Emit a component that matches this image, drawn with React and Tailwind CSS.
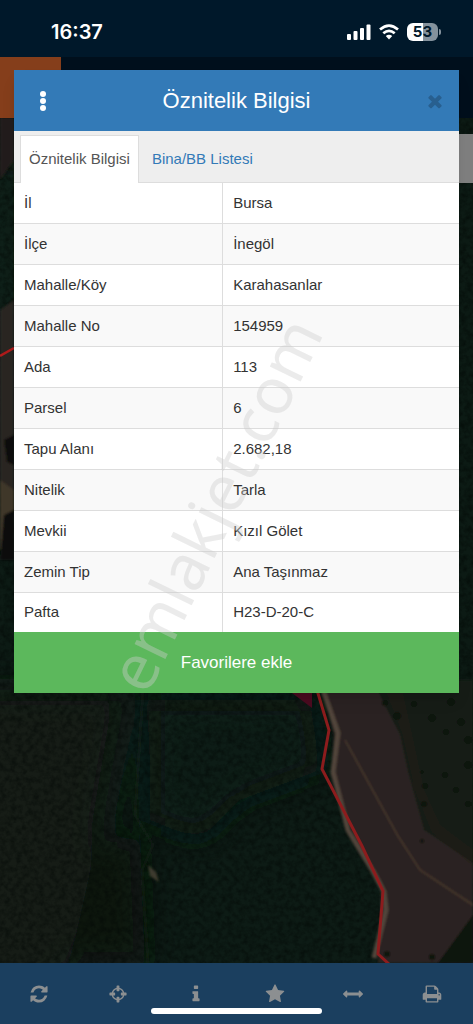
import React from "react";

const rows = [
  ["İl", "Bursa"],
  ["İlçe", "İnegöl"],
  ["Mahalle/Köy", "Karahasanlar"],
  ["Mahalle No", "154959"],
  ["Ada", "113"],
  ["Parsel", "6"],
  ["Tapu Alanı", "2.682,18"],
  ["Nitelik", "Tarla"],
  ["Mevkii", "Kızıl Gölet"],
  ["Zemin Tip", "Ana Taşınmaz"],
  ["Pafta", "H23-D-20-C"],
];

const tools = [
  {
    label: "Yenile",
    d: "M1639 1056q0 5-1 7-64 268-268 434.5t-478 166.5q-146 0-282.5-55t-243.5-157l-129 129q-19 19-45 19t-45-19-19-45v-448q0-26 19-45t45-19h448q26 0 45 19t19 45-19 45l-137 137q71 66 161 102t187 36q134 0 250-65t186-179q11-17 53-117 8-23 30-23h192q13 0 22.5 9.5t9.5 22.5zm25-800v448q0 26-19 45t-45 19h-448q-26 0-45-19t-19-45 19-45l138-138q-148-137-349-137-134 0-250 65t-186 179q-11 17-53 117-8 23-30 23h-199q-13 0-22.5-9.5t-9.5-22.5v-7q65-268 270-434.5t480-166.5q146 0 284 55.5t245 156.5l130-129q19-19 45-19t45 19 19 45z",
  },
  {
    label: "Konum",
    d: "M1325 1024h-109q-26 0-45-19t-19-45v-128q0-26 19-45t45-19h109q-32-108-112.5-188.5t-188.5-112.5v109q0 26-19 45t-45 19h-128q-26 0-45-19t-19-45v-109q-108 32-188.5 112.5t-112.5 188.5h109q26 0 45 19t19 45v128q0 26-19 45t-45 19h-109q32 108 112.5 188.5t188.5 112.5v-109q0-26 19-45t45-19h128q26 0 45 19t19 45v109q108-32 188.5-112.5t112.5-188.5zm339-192v128q0 26-19 45t-45 19h-143q-37 161-154.5 278.5t-278.5 154.5v143q0 26-19 45t-45 19h-128q-26 0-45-19t-19-45v-143q-161-37-278.5-154.5t-154.5-278.5h-143q-26 0-45-19t-19-45v-128q0-26 19-45t45-19h143q37-161 154.5-278.5t278.5-154.5v-143q0-26 19-45t45-19h128q26 0 45 19t19 45v143q161 37 278.5 154.5t154.5 278.5h143q26 0 45 19t19 45z",
  },
  {
    label: "Bilgi",
    d: "M1216 1344v128q0 26-19 45t-45 19h-512q-26 0-45-19t-19-45v-128q0-26 19-45t45-19h64v-384h-64q-26 0-45-19t-19-45v-128q0-26 19-45t45-19h384q26 0 45 19t19 45v576h64q26 0 45 19t19 45zm-128-1152v192q0 26-19 45t-45 19h-256q-26 0-45-19t-19-45v-192q0-26 19-45t45-19h256q26 0 45 19t19 45z",
  },
  {
    label: "Favoriler",
    d: "M1728 647q0 22-26 48l-363 354 86 500q1 7 1 20 0 21-10.5 35.5t-30.5 14.5q-19 0-40-12l-449-236-449 236q-22 12-40 12-21 0-31.5-14.5t-10.5-35.5q0-6 2-20l86-500-364-354q-25-27-25-48 0-37 56-46l502-73 225-455q19-41 49-41t49 41l225 455 502 73q56 9 56 46z",
  },
  {
    label: "Ölçüm",
    d: "M1792 896q0 26-19 45l-256 256q-19 19-45 19t-45-19-19-45v-128h-1024v128q0 26-19 45t-45 19-45-19l-256-256q-19-19-19-45t19-45l256-256q19-19 45-19t45 19 19 45v128h1024v-128q0-26 19-45t45-19 45 19l256 256q19 19 19 45z",
  },
  {
    label: "Yazdır",
    d: "M448 1536h896v-256h-896v256zm0-640h896v-384h-160q-40 0-68-28t-28-68v-160h-640v640zm1152 64q0-26-19-45t-45-19-45 19-19 45 19 45 45 19 45-19 19-45zm128 0v416q0 13-9.5 22.5t-22.5 9.5h-224v160q0 40-28 68t-68 28h-960q-40 0-68-28t-28-68v-160h-224q-13 0-22.5-9.5t-9.5-22.5v-416q0-79 56.5-135.5t135.5-56.5h64v-544q0-40 28-68t68-28h672q40 0 88 20t76 48l152 152q28 28 48 76t20 88v256h64q79 0 135.5 56.5t56.5 135.5z",
  },
];

function StatusBar() {
  return (
    <div className="flex h-[57px] items-center justify-between bg-[#00182a] pt-1.5 pr-8 pl-[51px] text-white">
      <span className="font-['Inter',sans-serif] text-xl font-semibold">16:37</span>
      <div className="flex items-center gap-2">
        <svg className="h-4 w-6" viewBox="0 0 24 16" fill="currentColor" aria-hidden="true">
          <rect x="0" y="10" width="4" height="6" rx="1" />
          <rect x="6.500" y="7" width="4" height="9" rx="1" />
          <rect x="13" y="4" width="4" height="12" rx="1" />
          <rect x="19.500" y="0.500" width="4" height="15.500" rx="1" />
        </svg>
        <svg className="h-4 w-5" viewBox="0 0 20 16" fill="none" stroke="currentColor" strokeWidth="2.700" aria-hidden="true">
          <path d="M1 5.600 Q10 -2.400 19 5.600" />
          <path d="M4.300 9.300 Q10 4.300 15.700 9.300" />
          <path d="M6.800 12 Q10 9.500 13.200 12 L10 15.400Z" fill="currentColor" stroke="none" />
        </svg>
        <div className="flex items-center gap-px">
          <div className="flex h-[18px] w-[31px] items-center justify-center rounded-md bg-linear-to-r from-white from-52% to-[#84929d] to-52% font-['Inter',sans-serif] text-[15px] leading-none font-bold text-[#00182a]">
            53
          </div>
          <div className="h-1.5 w-0.5 rounded-r-full bg-[#84929d]" />
        </div>
      </div>
    </div>
  );
}

function SatelliteMap() {
  return (
    <svg
      className="absolute inset-0 h-full w-full"
      viewBox="0 118 473 845"
      preserveAspectRatio="xMidYMid slice"
      aria-hidden="true"
    >
      <defs>
        <filter id="trees" x="0" y="0" width="100%" height="100%" colorInterpolationFilters="sRGB">
          <feTurbulence type="fractalNoise" baseFrequency="0.18" numOctaves="3" seed="7" />
          <feColorMatrix values="0 0 0 0 0.010  0 0 0 0 0.030  0 0 0 0 0.020  2.200 0 0 0 -0.800" />
        </filter>
        <filter id="soft" x="-30%" y="-30%" width="160%" height="160%">
          <feGaussianBlur stdDeviation="16" />
        </filter>
        <filter id="edge">
          <feGaussianBlur stdDeviation="0.800" />
        </filter>
      </defs>
      <rect y="118" width="473" height="845" fill="#0d1b15" />
      <g filter="url(#soft)">
        <path d="M-40 690H125L100 840L60 1000H-40Z" fill="#141f17" />
        <path d="M150 700H310L320 770L240 800L200 840L150 820Z" fill="#0d1f18" />
        <path d="M95 850L140 830L145 963H70Z" fill="#08120f" />
        <path d="M-20 160H24V330H-20Z" fill="#0f2413" />
      </g>
      <rect y="118" width="473" height="845" filter="url(#trees)" opacity=".5" />
      <g filter="url(#edge)">
        <path d="M320 680H473V868V918L438 963H378L381 891L350 825L331 775L334 735Z" fill="#2c2421" />
        <path d="M372 680H473V863L424 830L408 772L400 735Z" fill="#171f19" />
        <path d="M382 680L403 735L415 790L432 832L473 866V850L440 825L424 790L412 735L402 690Z" fill="#232019" opacity=".7" />
        <path d="M345 740L398 836L420 870L473 905" fill="none" stroke="#47392f" strokeWidth="1.500" />
        <path d="M323 690L338 733L333 772L348 830L374 873L384 892L386 910L374 958" fill="none" stroke="#51443a" strokeWidth="5" />
        <path d="M438 963L473 915V963Z" fill="#0b120e" />
        <path d="M148 865L156 872L159 882L150 876Z" fill="#3c3b2d" />
        <path d="M143 690L135 815L153 845L142 870L148 963" fill="none" stroke="#232a22" strokeWidth="1.200" opacity=".6" />
        <path d="M0 118L14 118V160L0 180Z" fill="#231f1a" />
        <path d="M0 310L14 300V540L0 548Z" fill="#2c2521" />
        <path d="M0 480L14 490V535L0 550Z" fill="#40382c" />
        <path d="M4 440L14 435V465L7 462ZM4 515L14 510V560H0Z" fill="#0c100d" />
        <g fill="#0a120e">
          <circle cx="385" cy="703" r="3" />
          <circle cx="397" cy="716" r="4" />
          <circle cx="414" cy="704" r="3" />
          <circle cx="432" cy="718" r="4" />
          <circle cx="446" cy="732" r="3" />
          <circle cx="451" cy="702" r="4" />
          <circle cx="461" cy="722" r="4" />
          <circle cx="468" cy="740" r="4" />
          <circle cx="422" cy="772" r="2" />
          <circle cx="425" cy="786" r="3" />
          <circle cx="445" cy="775" r="3" />
          <circle cx="424" cy="804" r="3" />
          <circle cx="456" cy="790" r="3" />
          <circle cx="468" cy="765" r="4" />
          <circle cx="468" cy="804" r="3" />
          <circle cx="422" cy="841" r="2" />
          <circle cx="387" cy="954" r="3" />
          <circle cx="432" cy="957" r="3" />
        </g>
      </g>
      <path d="M288 690L312 708V690Z" fill="#4b0b20" />
      <path d="M317 690L329 730L322 769L362 846L383 891L378 954L390 965" fill="none" stroke="#8c1c1d" strokeWidth="3" />
      <path d="M0 356L14 348" stroke="#b01b1b" strokeWidth="2.500" />
    </svg>
  );
}

function AttributeDialog() {
  return (
    <section
      role="dialog"
      aria-labelledby="dialog-title"
      className="relative bg-white shadow-lg"
    >
      <header className="grid h-[61px] grid-cols-[58px_1fr_58px] items-center bg-[#337ab7] text-white">
        <button type="button" aria-label="Menü" className="flex h-full items-center justify-center">
          <svg className="h-5 w-1.5" viewBox="0 0 6 20" fill="currentColor" aria-hidden="true">
            <circle cx="3" cy="3" r="3" />
            <circle cx="3" cy="10" r="3" />
            <circle cx="3" cy="17" r="3" />
          </svg>
        </button>
        <h1 id="dialog-title" className="text-center text-[22px]">
          Öznitelik Bilgisi
        </h1>
        <button type="button" aria-label="Kapat" className="flex h-full items-center justify-center pl-2.5 text-[#285f8f]">
          <svg className="h-5 w-5" viewBox="0 0 1792 1792" fill="currentColor" aria-hidden="true">
            <path d="M1490 1322q0 40-28 68l-136 136q-28 28-68 28t-68-28l-294-294-294 294q-28 28-68 28t-68-28l-136-136q-28-28-28-68t28-68l294-294-294-294q-28-28-28-68t28-68l136-136q28-28 68-28t68 28l294 294 294-294q28-28 68-28t68 28l136 136q28 28 28 68t-28 68l-294 294 294 294q28 28 28 68z" />
          </svg>
        </button>
      </header>

      <div role="tablist" className="flex h-[52px] items-end border-b border-[#dddddd] bg-[#eeeeee] pl-1.5 text-[15px]">
        <button
          type="button"
          role="tab"
          aria-selected="true"
          className="-mb-px h-12 border border-b-0 border-[#dddddd] bg-white px-2 text-[#555555]"
        >
          Öznitelik Bilgisi
        </button>
        <button type="button" role="tab" aria-selected="false" className="h-[46px] px-[13px] text-[#337ab7]">
          Bina/BB Listesi
        </button>
      </div>

      <table className="w-full table-fixed border-separate border-spacing-0 text-[15px] text-[#333333]">
        <colgroup>
          <col className="w-[47%]" />
          <col />
        </colgroup>
        <tbody>
          {rows.map(([name, value]) => (
            <tr key={name} className="group h-[41px] even:bg-[#f9f9f9] last:h-[39px]">
              <th
                scope="row"
                className="border-r border-b border-[#dddddd] px-2.5 text-left font-normal group-last:border-b-0"
              >
                {name}
              </th>
              <td className="border-b border-[#dddddd] px-2.5 group-last:border-b-0">{value}</td>
            </tr>
          ))}
        </tbody>
      </table>

      <button type="button" className="block h-[61px] w-full bg-[#5cb85c] text-[17px] text-white">
        Favorilere ekle
      </button>

      <div className="pointer-events-none absolute inset-x-0 top-[132px] bottom-0 flex items-center justify-center pt-28 pr-11">
        <span className="-rotate-[64deg] font-['Noto_Sans',sans-serif] text-[64px] leading-none whitespace-nowrap text-[#cccccc]/40">
          emlakjet.com
        </span>
      </div>
    </section>
  );
}

export default function App() {
  return (
    <div className="relative flex min-h-screen flex-col bg-[#00101e] font-['Liberation_Sans',Arial,sans-serif]">
      <StatusBar />
      <div className="flex h-[61px] bg-[#000f1c]">
        <div className="w-[61px] bg-[#853e1b]" />
      </div>
      <main className="relative flex-1 overflow-hidden">
        <SatelliteMap />
        <div className="absolute top-4 right-0 h-[49px] w-10 bg-[#7f7f7f]" />
      </main>
      <nav className="relative flex h-[61px] bg-[#1b3f5f] pr-0.5 text-[#8c8f91]">
        {tools.map((tool) => (
          <button
            key={tool.label}
            type="button"
            aria-label={tool.label}
            className="flex flex-1 items-center justify-center"
          >
            <svg className="h-5 w-5" viewBox="0 0 1792 1792" fill="currentColor" aria-hidden="true">
              <path d={tool.d} />
            </svg>
          </button>
        ))}
        <div className="absolute inset-x-0 bottom-2.5 mx-auto h-1.5 w-[36%] rounded-full bg-white" />
      </nav>
      <div className="absolute inset-x-0 top-[70px] px-[14px]">
        <AttributeDialog />
      </div>
    </div>
  );
}
